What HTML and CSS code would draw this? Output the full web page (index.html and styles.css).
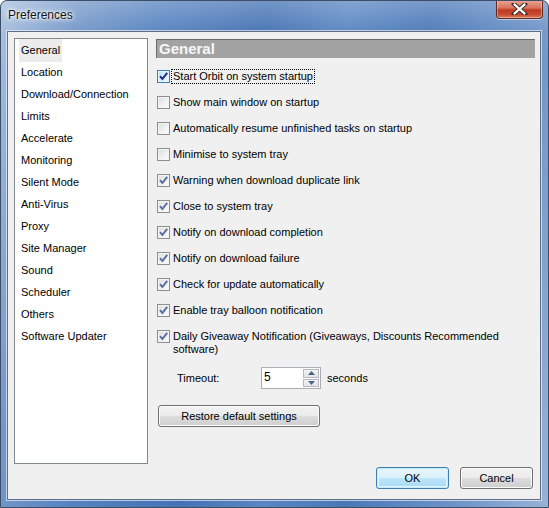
FILE: index.html
```html
<!DOCTYPE html>
<html>
<head>
<meta charset="utf-8">
<title>Preferences</title>
<link rel="stylesheet" href="styles.css">
</head>
<body>
<div class="window">
  <div class="titlebar">
    <span class="title">Preferences</span>
    <span class="close">
      <svg width="17" height="12" viewBox="0 0 17 12"><path d="M3 1 L14 11 M14 1 L3 11" stroke="#3a2a28" stroke-width="4.2" stroke-linecap="square"/><path d="M3.6 1.6 L13.4 10.4 M13.4 1.6 L3.6 10.4" stroke="#ffffff" stroke-width="2.2" stroke-linecap="square"/></svg>
    </span>
  </div>
  <div class="client">
    <div class="main">
      <ul class="listbox">
        <li><span class="sel">General</span></li>
        <li>Location</li>
        <li>Download/Connection</li>
        <li>Limits</li>
        <li>Accelerate</li>
        <li>Monitoring</li>
        <li>Silent Mode</li>
        <li>Anti-Virus</li>
        <li>Proxy</li>
        <li>Site Manager</li>
        <li>Sound</li>
        <li>Scheduler</li>
        <li>Others</li>
        <li>Software Updater</li>
      </ul>
      <div class="panel">
        <div class="header">General</div>
        <div class="row"><span class="cb hot"><svg width="11" height="11" viewBox="0 0 11 11"><path d="M2 5.2 L4.4 8 L9.2 1.8" fill="none" stroke="#1c2f86" stroke-width="2"/></svg></span><span class="lbl focus">Start Orbit on system startup</span></div>
        <div class="row"><span class="cb"></span><span class="lbl">Show main window on startup</span></div>
        <div class="row"><span class="cb"></span><span class="lbl">Automatically resume unfinished tasks on startup</span></div>
        <div class="row"><span class="cb"></span><span class="lbl">Minimise to system tray</span></div>
        <div class="row"><span class="cb"><svg width="11" height="11" viewBox="0 0 11 11"><path d="M2 5.2 L4.4 8 L9.2 1.8" fill="none" stroke="#5b6fa3" stroke-width="2"/></svg></span><span class="lbl">Warning when download duplicate link</span></div>
        <div class="row"><span class="cb"><svg width="11" height="11" viewBox="0 0 11 11"><path d="M2 5.2 L4.4 8 L9.2 1.8" fill="none" stroke="#5b6fa3" stroke-width="2"/></svg></span><span class="lbl">Close to system tray</span></div>
        <div class="row"><span class="cb"><svg width="11" height="11" viewBox="0 0 11 11"><path d="M2 5.2 L4.4 8 L9.2 1.8" fill="none" stroke="#5b6fa3" stroke-width="2"/></svg></span><span class="lbl">Notify on download completion</span></div>
        <div class="row"><span class="cb"><svg width="11" height="11" viewBox="0 0 11 11"><path d="M2 5.2 L4.4 8 L9.2 1.8" fill="none" stroke="#5b6fa3" stroke-width="2"/></svg></span><span class="lbl">Notify on download failure</span></div>
        <div class="row"><span class="cb"><svg width="11" height="11" viewBox="0 0 11 11"><path d="M2 5.2 L4.4 8 L9.2 1.8" fill="none" stroke="#5b6fa3" stroke-width="2"/></svg></span><span class="lbl">Check for update automatically</span></div>
        <div class="row"><span class="cb"><svg width="11" height="11" viewBox="0 0 11 11"><path d="M2 5.2 L4.4 8 L9.2 1.8" fill="none" stroke="#5b6fa3" stroke-width="2"/></svg></span><span class="lbl">Enable tray balloon notification</span></div>
        <div class="row"><span class="cb"><svg width="11" height="11" viewBox="0 0 11 11"><path d="M2 5.2 L4.4 8 L9.2 1.8" fill="none" stroke="#5b6fa3" stroke-width="2"/></svg></span><span class="lbl wrap">Daily Giveaway Notification (Giveaways, Discounts Recommended software)</span></div>
        <div class="timeout">
          <span class="tlabel">Timeout:</span>
          <span class="spin">
            <span class="val">5</span>
            <span class="arrows">
              <span class="arr"><svg width="7" height="4" viewBox="0 0 7 4"><path d="M0 4 L3.5 0 L7 4 Z" fill="#4d6185"/></svg></span>
              <span class="arr"><svg width="7" height="4" viewBox="0 0 7 4"><path d="M0 0 L3.5 4 L7 0 Z" fill="#4d6185"/></svg></span>
            </span>
          </span>
          <span class="secs">seconds</span>
        </div>
        <div class="restore-row"><button class="btn restore">Restore default settings</button></div>
      </div>
    </div>
    <div class="footer">
      <button class="btn ok">OK</button>
      <button class="btn">Cancel</button>
    </div>
  </div>
</div>
</body>
</html>
```
FILE: styles.css
```css
html, body {
  margin: 0;
  padding: 0;
  background: #ffffff;
}
body {
  font-family: "Liberation Sans", Arial, sans-serif;
  font-size: 11px;
  color: #000;
}
.window {
  width: 549px;
  height: 508px;
  box-sizing: border-box;
  border: 1px solid #3c4e68;
  border-radius: 7px 7px 0 0;
  display: flex;
  flex-direction: column;
  padding: 0 7px 7px 6px;
  background:
    linear-gradient(to bottom, rgba(255,255,255,0.25) 0px, rgba(255,255,255,0.05) 30px, rgba(255,255,255,0) 60px),
    linear-gradient(100deg, #a9c0df 0%, #7598c9 12%, #5683c0 25%, #4472b3 42%, #5a86c2 55%, #4a78b7 68%, #6d93c8 85%, #98b2d6 100%);
  overflow: hidden;
}
.titlebar {
  height: 30px;
  display: flex;
  align-items: flex-start;
  justify-content: space-between;
  flex: none;
}
.title {
  margin: 7px 0 0 1px;
  font-size: 12px;
  color: #111;
  text-shadow: 0 0 6px #ffffff, 0 0 4px #ffffff, 0 0 2px #ffffff;
}
.close {
  width: 45px;
  height: 18px;
  margin-top: -1px;
  margin-right: -2px;
  border: 1px solid #5e2a22;
  border-top: none;
  border-radius: 0 0 4px 4px;
  background: linear-gradient(to bottom, #e8a898 0%, #d8705c 45%, #c0381f 55%, #c84a30 80%, #dc7c5a 100%);
  box-shadow: inset 0 0 0 1px rgba(255,255,255,0.35), 0 1px 0 rgba(255,255,255,0.5);
  display: flex;
  align-items: center;
  justify-content: center;
}
.client {
  flex: 1;
  background: #f0f0f0;
  border: 1px solid #5d6e86;
  box-shadow: 0 0 0 1px rgba(255,255,255,0.6);
  display: flex;
  flex-direction: column;
  padding: 6px 0 0 6px;
}
.main {
  display: flex;
  align-items: flex-start;
}
.listbox {
  list-style: none;
  margin: 0;
  padding: 0;
  width: 132px;
  height: 424px;
  background: #fff;
  border: 1px solid #828790;
}
.listbox li {
  height: 22px;
  line-height: 22px;
  padding-left: 6px;
  white-space: nowrap;
}
.listbox .sel {
  display: inline-block;
  background: #ececec;
  margin-left: -2px;
  padding: 0 2px;
  height: 23px;
}
.panel {
  margin-left: 8px;
  width: 379px;
  padding-top: 1px;
}
.header {
  height: 19px;
  box-sizing: border-box;
  background: #a3a3a3;
  border-top: 1px solid #6a6a6a;
  border-left: 1px solid #6a6a6a;
  color: #f7f7f7;
  font-weight: bold;
  font-size: 15px;
  line-height: 18px;
  padding-left: 2px;
}
.header + .row {
  margin-top: 5px;
}
.row {
  display: flex;
  align-items: flex-start;
  padding: 7px 0 6px 1px;
  line-height: 13px;
}
.cb {
  flex: none;
  width: 11px;
  height: 11px;
  border: 1px solid #8e8f8f;
  background: linear-gradient(135deg, #dcdcdc 0%, #f2f2f2 60%, #fcfcfc 100%);
  box-shadow: inset 0 0 0 1px #f4f4f4;
  margin-right: 3px;
  display: flex;
}
.cb.hot {
  border-color: #3c7fb1;
  background: linear-gradient(135deg, #b9dffa 0%, #def1fd 60%, #f2f9fe 100%);
  box-shadow: inset 0 0 0 1px #e6f4fd;
}
.lbl {
  white-space: nowrap;
  padding: 0 1px;
  margin-left: -1px;
}
.lbl.focus {
  outline: 1px dotted #000;
  outline-offset: 0;
}
.lbl.wrap {
  white-space: normal;
  width: 340px;
}
.timeout {
  display: flex;
  align-items: center;
  margin-top: 5px;
  padding-left: 21px;
  height: 22px;
}
.tlabel {
  width: 84px;
}
.spin {
  width: 60px;
  height: 22px;
  box-sizing: border-box;
  border: 1px solid #abadb3;
  border-top-color: #acb0b7;
  background: #fff;
  display: flex;
  justify-content: space-between;
}
.val {
  font-size: 12px;
  padding: 2px 0 0 2px;
}
.arrows {
  width: 16px;
  display: flex;
  flex-direction: column;
  padding: 1px 1px 1px 0;
  gap: 1px;
}
.arr {
  flex: 1;
  border: 1px solid #b5b8c0;
  background: linear-gradient(to bottom, #f4f4f4, #e2e3e6);
  display: flex;
  align-items: center;
  justify-content: center;
}
.secs {
  margin-left: 6px;
}
.restore-row {
  margin-top: 16px;
  padding-left: 2px;
}
.btn {
  font-family: "Liberation Sans", Arial, sans-serif;
  font-size: 11px;
  color: #000;
  height: 22px;
  border: 1px solid #707070;
  border-radius: 3px;
  background: linear-gradient(to bottom, #f2f2f2 0%, #ebebeb 49%, #dddddd 50%, #cfcfcf 100%);
  box-shadow: inset 0 0 0 1px #fcfcfc;
  padding: 0;
  margin: 0;
}
.restore {
  width: 162px;
}
.footer {
  display: flex;
  justify-content: flex-end;
  gap: 11px;
  margin-top: 3px;
  padding-right: 7px;
}
.footer .btn {
  width: 73px;
  height: 22px;
}
.btn.ok {
  border-color: #3c7fb1;
  background: linear-gradient(to bottom, #eaf6fd 0%, #d9f0fc 49%, #bee6fd 50%, #a7d9f5 100%);
  box-shadow: inset 0 0 0 1px #c6ecfd, inset 0 0 0 2px #e0f4fe;
}
```
